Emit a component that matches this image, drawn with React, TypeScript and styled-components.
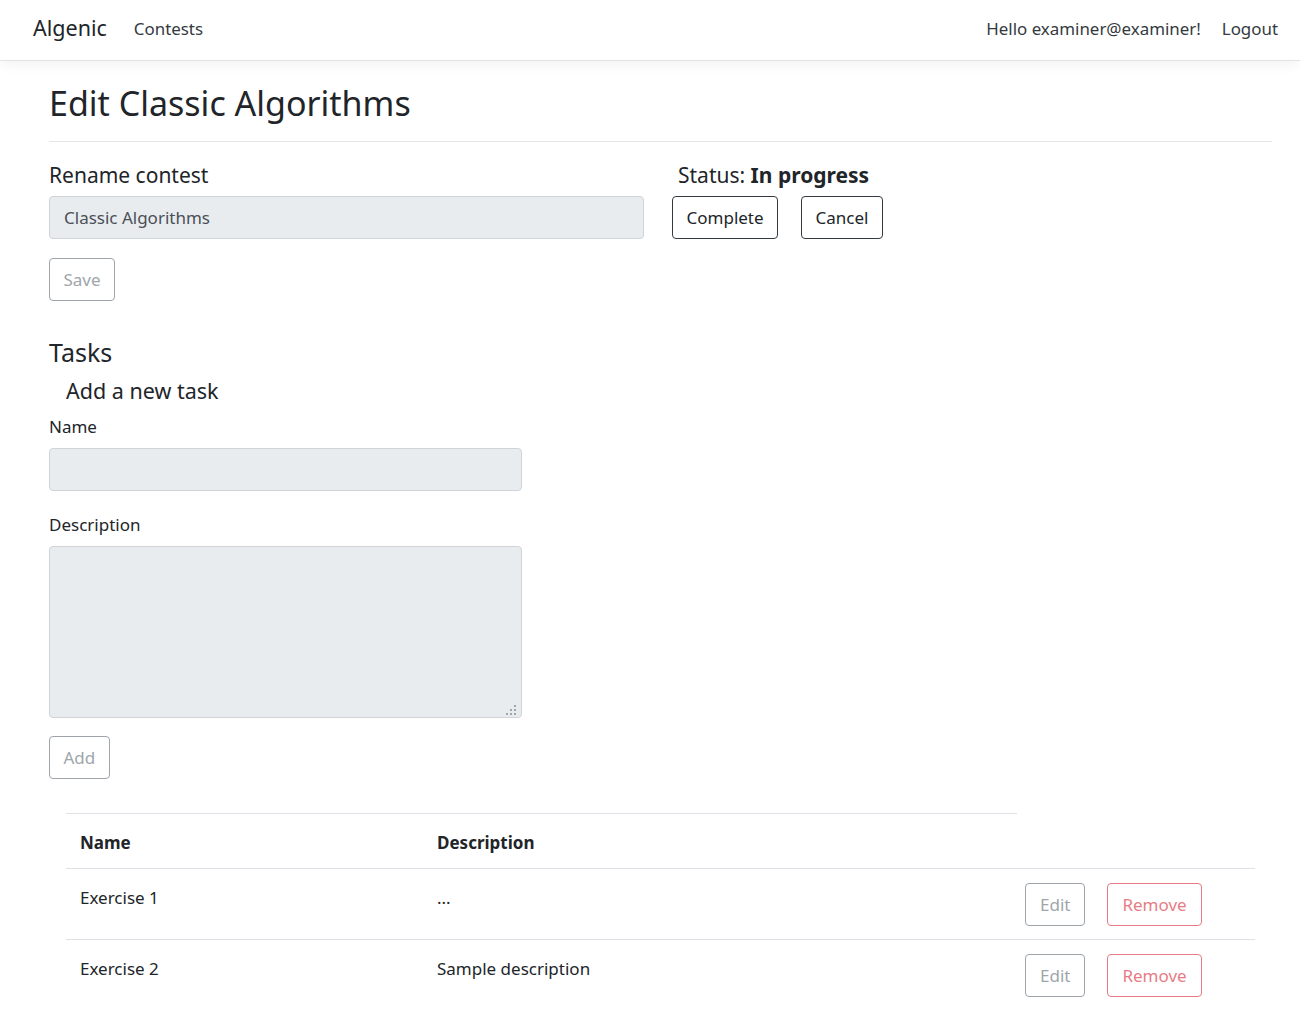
import React from 'react';
import styled, { createGlobalStyle, css } from 'styled-components';

const Global = createGlobalStyle`
  html, body { margin: 0; padding: 0; background: #fff; }
  body {
    font-family: "Noto Sans", "Open Sans", sans-serif;
    font-size: 17px;
    line-height: 1.5;
    color: #212529;
  }
  * { box-sizing: border-box; }
`;

const Nav = styled.nav`
  height: 61px;
  display: flex;
  align-items: center;
  justify-content: space-between;
  padding: 0 22px 3px 33px;
  border-bottom: 1px solid #e3e3e3;
  box-shadow: 0 4px 12px rgba(0, 0, 0, 0.05);
  background: #fff;
`;

const NavGroup = styled.div<{ gap: number }>`
  display: flex;
  align-items: center;
  gap: ${(p) => p.gap}px;
`;

const Brand = styled.a`
  font-size: 21.5px;
  color: #212529;
  text-decoration: none;
`;

const NavLink = styled.a`
  font-size: 16.9px;
  color: #343a40;
  text-decoration: none;
`;

const Main = styled.main`
  padding: 0 28px 0 49px;
`;

const Title = styled.h1`
  margin: 22px 0 0;
  font-size: 34px;
  font-weight: 400;
  line-height: 1.2;
`;

const Rule = styled.hr`
  margin: 17px 0 0;
  border: 0;
  border-top: 1px solid rgba(0, 0, 0, 0.1);
`;

const FormGrid = styled.section`
  display: grid;
  grid-template-columns: 595px 1fr;
  column-gap: 28px;
  margin-top: 21px;
`;

const Col = styled.div`
  display: flex;
  flex-direction: column;
  align-items: flex-start;
`;

const SubHeading = styled.h5<{ indent?: number; top?: number; size?: number }>`
  margin: ${(p) => p.top ?? 0}px 0 0;
  padding-left: ${(p) => p.indent ?? 0}px;
  font-size: ${(p) => p.size ?? 21}px;
  font-weight: 400;
  line-height: 1.2;
  b { font-weight: 700; }
`;

const SectionHeading = styled.h4`
  margin: 36px 0 0;
  font-size: 25px;
  font-weight: 400;
  line-height: 1.2;
`;

const Label = styled.label<{ top: number }>`
  display: block;
  margin-top: ${(p) => p.top}px;
  font-size: 17px;
  line-height: 26px;
`;

const fieldBase = css`
  display: block;
  font-family: inherit;
  font-size: 17px;
  line-height: 1.5;
  color: #495057;
  background: #e9ecef;
  border: 1px solid #ced4da;
  border-radius: 4px;
  padding: 7px 14px;
  outline: none;
`;

const TextInput = styled.input<{ w: number; top: number }>`
  ${fieldBase};
  width: ${(p) => p.w}px;
  height: 43px;
  margin-top: ${(p) => p.top}px;
`;

const AreaWrap = styled.div`
  position: relative;
  width: 473px;
  height: 172px;
  margin-top: 8px;
`;

const TextArea = styled.textarea`
  ${fieldBase};
  width: 100%;
  height: 100%;
  resize: none;
`;

const Grip = styled.svg`
  position: absolute;
  right: 6px;
  bottom: 3px;
  width: 10px;
  height: 10px;
  pointer-events: none;
`;

type Tone = 'dark' | 'secondary' | 'danger';
const toneColor: Record<Tone, string> = {
  dark: '#343a40',
  secondary: '#6c757d',
  danger: '#dc3545',
};

const Button = styled.button<{ tone: Tone; faded?: boolean; top?: number; pad?: number }>`
  font-family: inherit;
  font-size: 17px;
  line-height: 1.5;
  height: 43px;
  padding: 0 ${(p) => p.pad ?? 13.5}px;
  margin-top: ${(p) => p.top ?? 0}px;
  background: transparent;
  border: 1px solid ${(p) => toneColor[p.tone]};
  color: ${(p) => (p.tone === 'dark' ? '#212529' : toneColor[p.tone])};
  border-radius: 4px;
  opacity: ${(p) => (p.faded ? 0.65 : 1)};
  cursor: pointer;
`;

const ButtonRow = styled.div<{ gap: number; top?: number }>`
  display: flex;
  gap: ${(p) => p.gap}px;
  margin-top: ${(p) => p.top ?? 0}px;
`;

const Table = styled.table`
  margin: 34px 0 0 17px;
  width: 1189px;
  border-collapse: collapse;
  table-layout: fixed;
`;

const Th = styled.th<{ w?: number }>`
  width: ${(p) => (p.w ? `${p.w}px` : 'auto')};
  text-align: left;
  font-weight: 700;
  padding: 16px 14px 12px;
  line-height: 26px;
  border-top: 1px solid #dee2e6;
`;

const Td = styled.td<{ actions?: boolean }>`
  vertical-align: top;
  padding: ${(p) => (p.actions ? '14px 8px 13px' : '16px 14px 14px')};
  line-height: 26px;
  border-top: 1px solid #dee2e6;
`;

const tasks = [
  { name: 'Exercise 1', description: '...' },
  { name: 'Exercise 2', description: 'Sample description' },
];

export default function App() {
  return (
    <>
      <Global />
      <Nav>
        <NavGroup gap={27}>
          <Brand href="#">Algenic</Brand>
          <NavLink href="#">Contests</NavLink>
        </NavGroup>
        <NavGroup gap={21}>
          <NavLink href="#">Hello examiner@examiner!</NavLink>
          <NavLink href="#">Logout</NavLink>
        </NavGroup>
      </Nav>
      <Main>
        <Title>Edit Classic Algorithms</Title>
        <Rule />
        <FormGrid>
          <Col>
            <SubHeading>Rename contest</SubHeading>
            <TextInput w={595} top={8} readOnly value="Classic Algorithms" />
            <Button tone="secondary" faded top={19}>Save</Button>
          </Col>
          <Col>
            <SubHeading indent={6}>
              Status: <b>In progress</b>
            </SubHeading>
            <ButtonRow gap={23} top={8}>
              <Button tone="dark">Complete</Button>
              <Button tone="dark">Cancel</Button>
            </ButtonRow>
          </Col>
        </FormGrid>
        <SectionHeading>Tasks</SectionHeading>
        <SubHeading indent={17} top={11} size={21.5}>Add a new task</SubHeading>
        <Label top={10}>Name</Label>
        <TextInput w={473} top={8} readOnly />
        <Label top={21}>Description</Label>
        <AreaWrap>
          <TextArea readOnly />
          <Grip viewBox="0 0 10 10" aria-hidden="true">
            <g fill="#a3a6a9">
              <rect x="8" y="0" width="2" height="2" />
              <rect x="4" y="4" width="2" height="2" />
              <rect x="8" y="4" width="2" height="2" />
              <rect x="0" y="8" width="2" height="2" />
              <rect x="4" y="8" width="2" height="2" />
              <rect x="8" y="8" width="2" height="2" />
            </g>
          </Grip>
        </AreaWrap>
        <Button tone="secondary" faded top={18}>Add</Button>
        <Table>
          <thead>
            <tr>
              <Th w={357}>Name</Th>
              <Th w={594}>Description</Th>
            </tr>
          </thead>
          <tbody>
            {tasks.map((t) => (
              <tr key={t.name}>
                <Td>{t.name}</Td>
                <Td>{t.description}</Td>
                <Td actions>
                  <ButtonRow gap={22}>
                    <Button tone="secondary" faded pad={14}>Edit</Button>
                    <Button tone="danger" faded pad={14}>Remove</Button>
                  </ButtonRow>
                </Td>
              </tr>
            ))}
          </tbody>
        </Table>
      </Main>
    </>
  );
}
